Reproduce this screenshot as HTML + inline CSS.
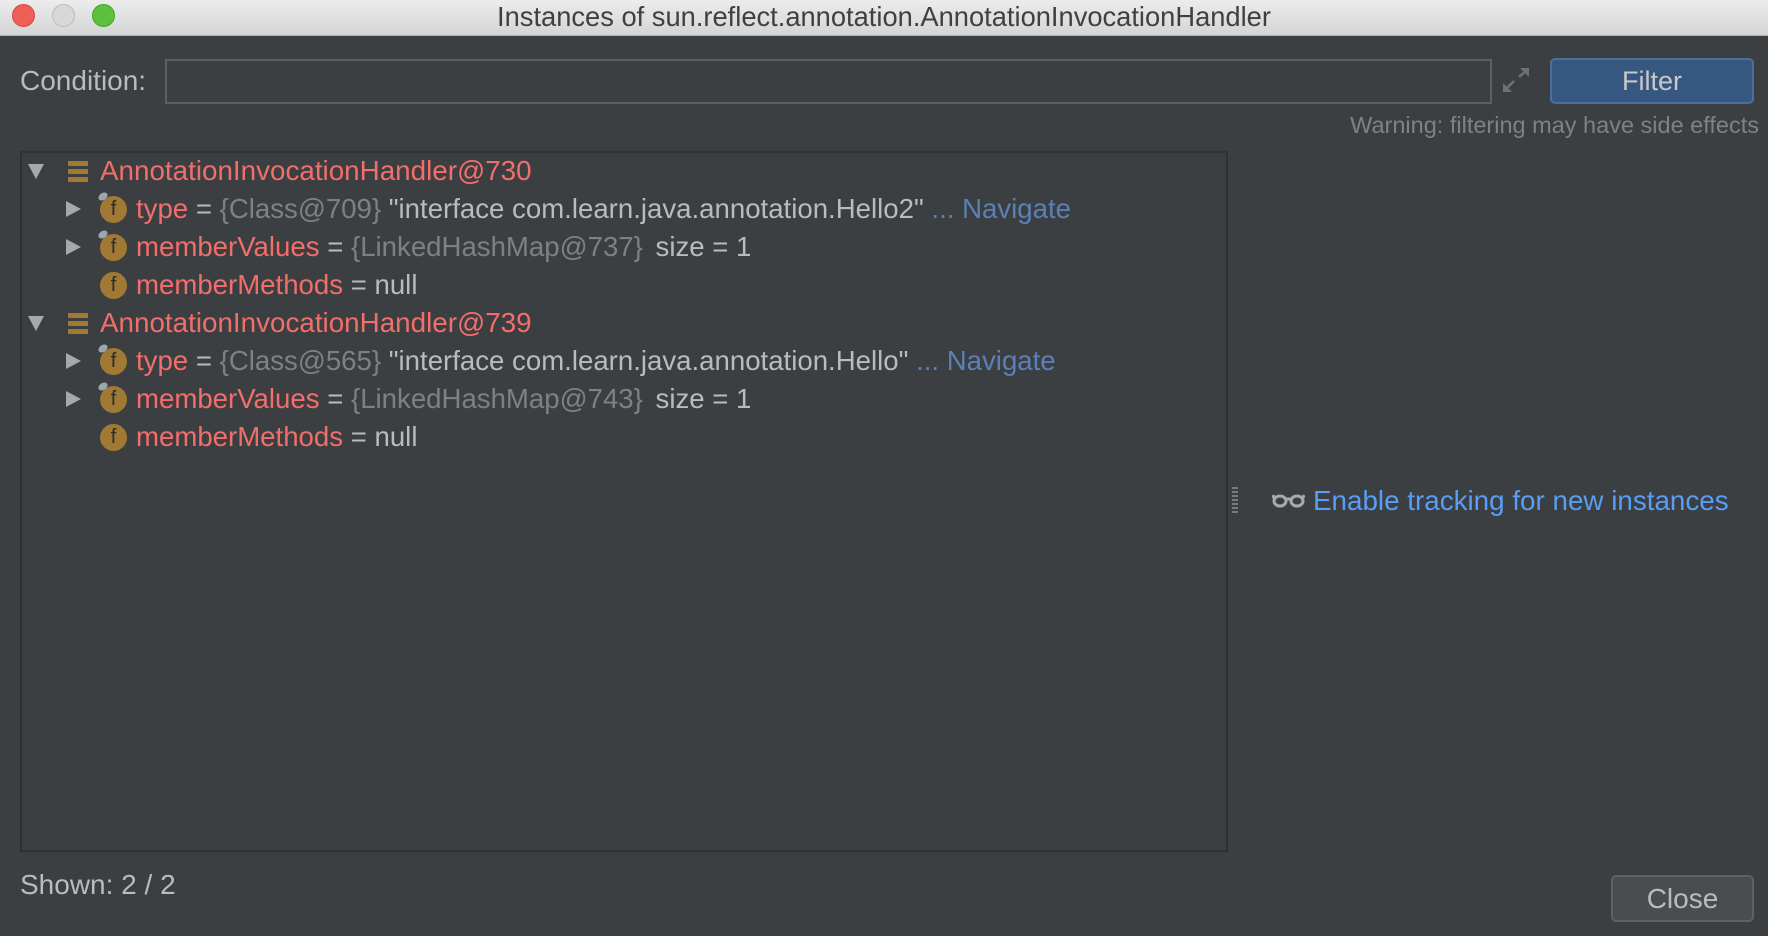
<!DOCTYPE html>
<html><head><meta charset="utf-8"><style>
*{margin:0;padding:0;box-sizing:border-box}
body{width:1768px;height:936px;background:#3c3f41;font-family:"Liberation Sans",sans-serif;position:relative;overflow:hidden;color:#bbbbbb}
.abs{position:absolute}
.title{left:0;top:0;width:1768px;height:36px;background:linear-gradient(#ececec,#d5d5d5);border-bottom:1px solid #b0b0b0;text-align:center;font-size:27.3px;line-height:34px;color:#404040}
.dot{width:23px;height:23px;border-radius:50%;top:4px}
.row{position:absolute;white-space:pre;font-size:27.8px;line-height:38px;height:38px}
.row.c{font-size:27.6px}
.r{color:#f26e6b}.g{color:#808080}.w{color:#bbbbbb}.n{color:#5b80b5}
.fi{position:absolute;width:27px;height:27px;border-radius:50%;background:#a07a34;color:#2b2b2b;font-size:20px;line-height:27px;text-align:center}
.tri{position:absolute;width:0;height:0}
</style></head><body>
<div class="abs title">Instances of sun.reflect.annotation.AnnotationInvocationHandler</div>
<div class="abs dot" style="left:12px;background:#ee5f58;border:1px solid #d44840"></div>
<div class="abs dot" style="left:52px;background:#d8d8d8;border:1px solid #bcbcbc"></div>
<div class="abs dot" style="left:92px;background:#5cc13d;border:1px solid #48a32c"></div>

<div class="abs" style="left:20px;top:64px;font-size:28px;line-height:34px;color:#bbbbbb">Condition:</div>
<div class="abs" style="left:165px;top:59px;width:1327px;height:45px;border:2px solid #5e6060;background:#3c3f41"></div>
<svg class="abs" style="left:1502px;top:67px" width="28" height="26" viewBox="0 0 28 26"><g stroke="#6e7275" stroke-width="2.5" fill="none"><path d="M3 23L12 14M17 10L25 3"/></g><path d="M1 25V16L10 25Z M27 1V10L18 1Z" fill="#6e7275"/></svg>
<div class="abs" style="left:1550px;top:58px;width:204px;height:46px;background:#365880;border:2px solid #4b6f99;border-radius:5px;text-align:center;font-size:27px;line-height:42px;color:#c8c8c8">Filter</div>
<div class="abs" style="right:9px;top:111px;font-size:23.5px;line-height:28px;color:#7f8182">Warning: filtering may have side effects</div>

<div class="abs" style="left:20px;top:151px;width:1208px;height:701px;border:2px solid #2f3133"></div>

<div class="tri" style="left:28px;top:164px;border-left:8.5px solid transparent;border-right:8.5px solid transparent;border-top:15px solid #a8a8a8"></div>
<div class="abs" style="left:68px;top:161px;width:20px;height:5px;background:#a07a34"></div>
<div class="abs" style="left:68px;top:169px;width:20px;height:5px;background:#a07a34"></div>
<div class="abs" style="left:68px;top:177px;width:20px;height:5px;background:#a07a34"></div>
<div class="row r" style="left:100px;top:152px">AnnotationInvocationHandler@730</div>

<div class="tri" style="left:66px;top:201px;border-top:8.5px solid transparent;border-bottom:8.5px solid transparent;border-left:15px solid #a8a8a8"></div>
<div class="fi" style="left:100px;top:196px">f</div><div class="abs" style="left:98px;top:193px;width:10px;height:7px;border-radius:50%;background:#9aa7b0;transform:rotate(-35deg)"></div>
<div class="row c" style="left:136px;top:190px"><span class="r">type</span><span class="w"> = </span><span class="g">{Class@709}</span><span class="w"> "interface com.learn.java.annotation.Hello2"</span><span class="n"> ... Navigate</span></div>

<div class="tri" style="left:66px;top:239px;border-top:8.5px solid transparent;border-bottom:8.5px solid transparent;border-left:15px solid #a8a8a8"></div>
<div class="fi" style="left:100px;top:234px">f</div><div class="abs" style="left:98px;top:231px;width:10px;height:7px;border-radius:50%;background:#9aa7b0;transform:rotate(-35deg)"></div>
<div class="row c" style="left:136px;top:228px"><span class="r">memberValues</span><span class="w"> = </span><span class="g">{LinkedHashMap@737}</span><span class="w" style="margin-left:5px"> size = 1</span></div>

<div class="fi" style="left:100px;top:272px">f</div>
<div class="row c" style="left:136px;top:266px"><span class="r">memberMethods</span><span class="w"> = null</span></div>

<div class="tri" style="left:28px;top:316px;border-left:8.5px solid transparent;border-right:8.5px solid transparent;border-top:15px solid #a8a8a8"></div>
<div class="abs" style="left:68px;top:313px;width:20px;height:5px;background:#a07a34"></div>
<div class="abs" style="left:68px;top:321px;width:20px;height:5px;background:#a07a34"></div>
<div class="abs" style="left:68px;top:329px;width:20px;height:5px;background:#a07a34"></div>
<div class="row r" style="left:100px;top:304px">AnnotationInvocationHandler@739</div>

<div class="tri" style="left:66px;top:353px;border-top:8.5px solid transparent;border-bottom:8.5px solid transparent;border-left:15px solid #a8a8a8"></div>
<div class="fi" style="left:100px;top:348px">f</div><div class="abs" style="left:98px;top:345px;width:10px;height:7px;border-radius:50%;background:#9aa7b0;transform:rotate(-35deg)"></div>
<div class="row c" style="left:136px;top:342px"><span class="r">type</span><span class="w"> = </span><span class="g">{Class@565}</span><span class="w"> "interface com.learn.java.annotation.Hello"</span><span class="n"> ... Navigate</span></div>

<div class="tri" style="left:66px;top:391px;border-top:8.5px solid transparent;border-bottom:8.5px solid transparent;border-left:15px solid #a8a8a8"></div>
<div class="fi" style="left:100px;top:386px">f</div><div class="abs" style="left:98px;top:383px;width:10px;height:7px;border-radius:50%;background:#9aa7b0;transform:rotate(-35deg)"></div>
<div class="row c" style="left:136px;top:380px"><span class="r">memberValues</span><span class="w"> = </span><span class="g">{LinkedHashMap@743}</span><span class="w" style="margin-left:5px"> size = 1</span></div>

<div class="fi" style="left:100px;top:424px">f</div>
<div class="row c" style="left:136px;top:418px"><span class="r">memberMethods</span><span class="w"> = null</span></div>

<div class="abs" style="left:1232px;top:487px;width:6px;height:28px;background:repeating-linear-gradient(#7a7a7a 0 2px,transparent 2px 4px)"></div>

<svg class="abs" style="left:1272px;top:492px" width="33" height="16" viewBox="0 0 33 16"><g fill="none" stroke="#aaaaaa" stroke-width="3"><ellipse cx="8" cy="9" rx="6" ry="5"/><ellipse cx="25" cy="9" rx="6" ry="5"/><path d="M14 7h5M2 6L1 3M31 6l1-3"/></g></svg>
<div class="abs" style="left:1313px;top:484px;font-size:27.8px;line-height:34px;color:#589df6">Enable tracking for new instances</div>

<div class="abs" style="left:20px;top:868px;font-size:28px;line-height:34px;color:#bbbbbb">Shown: 2 / 2</div>
<div class="abs" style="left:1611px;top:875px;width:143px;height:47px;background:#4a4d50;border:2px solid #5e6163;border-radius:5px;text-align:center;font-size:28px;line-height:43px;color:#bbbbbb">Close</div>
</body></html>
